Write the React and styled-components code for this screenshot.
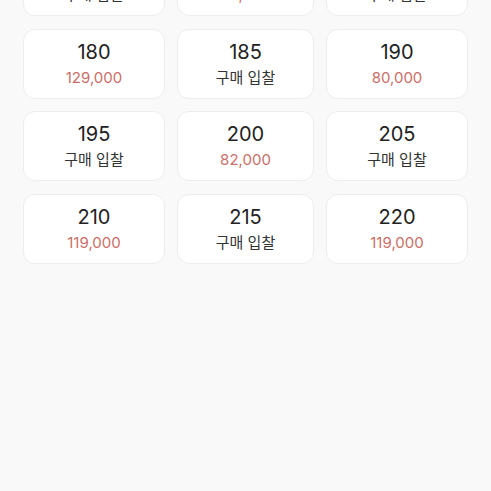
import React from 'react'
import styled, { createGlobalStyle } from 'styled-components'

const sizes = [
  { size: 165, price: null },
  { size: 170, price: '82,000' },
  { size: 175, price: null },
  { size: 180, price: '129,000' },
  { size: 185, price: null },
  { size: 190, price: '80,000' },
  { size: 195, price: null },
  { size: 200, price: '82,000' },
  { size: 205, price: null },
  { size: 210, price: '119,000' },
  { size: 215, price: null },
  { size: 220, price: '119,000' },
]

function App() {
  return (
    <Page>
      <GlobalStyle />
      <Grid>
        {sizes.map(item => (
          <SizeCard key={item.size}>
            <Size>{item.size}</Size>
            <Price $bid={!item.price}>{item.price || '구매 입찰'}</Price>
          </SizeCard>
        ))}
      </Grid>
    </Page>
  )
}

const GlobalStyle = createGlobalStyle`
  html, body {
    margin: 0;
    background: #f9f9f9;
    font-family: Inter, "Noto Sans CJK KR", sans-serif;
  }
`

const Page = styled.div`
  height: 491px;
  overflow: hidden;
  background: #f9f9f9;
`

// the list is scrolled, so the first row sits above the top edge
const Grid = styled.div`
  display: grid;
  grid-template-columns: 142px 137px 142px;
  grid-auto-rows: 70px;
  column-gap: 12px;
  row-gap: 12.5px;
  padding-left: 23px;
  margin-top: -54px;
`

const SizeCard = styled.div`
  display: flex;
  flex-direction: column;
  align-items: center;
  padding-top: 10px;
  box-sizing: border-box;
  background: #fff;
  border: 1px solid #ededed;
  border-radius: 12px;
`

const Size = styled.div`
  font-size: 20px;
  line-height: 24px;
  color: #222;
`

const Price = styled.div`
  margin-top: 4px;
  font-size: 15px;
  line-height: 20px;
  color: ${p => (p.$bid ? '#333' : '#c96e68')};
`

export default App
